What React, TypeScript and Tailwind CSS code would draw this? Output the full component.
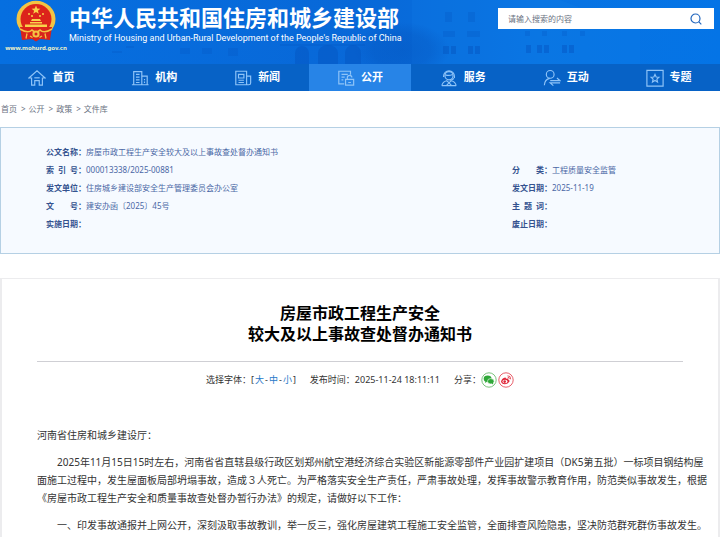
import type { ReactNode } from "react";

type NavItem = { name: string; icon: ReactNode; current?: boolean };

const navItems: NavItem[] = [
  {
    name: "首页",
    icon: (
      <>
        <path d="M1 10 L10 2 L19 10 H16 V18 H12.5 V13 H7.5 V18 H4 V10 Z" />
        <path d="M7 9.8 H13" />
      </>
    ),
  },
  {
    name: "机构",
    icon: (
      <>
        <path d="M3 17.5 V3 H12 V17.5 M12 8 H18 V17.5 M1 17.5 H19.5" />
        <path d="M5.5 6 H9.5 M5.5 9 H9.5 M5.5 12 H9.5 M5.5 15 H9.5 M15 11 V12.5 M15 14 V15.5" />
      </>
    ),
  },
  {
    name: "新闻",
    icon: (
      <>
        <path d="M2 2.5 H14 V17.5 H2 Z M14 8 H18.5 V15.5 Q18.5 17.5 16.5 17.5 H13" />
        <path d="M5 6 H11 V10 H5 Z M5 12.5 H11 M5 15 H11" />
      </>
    ),
  },
  {
    name: "公开",
    current: true,
    icon: (
      <>
        <path d="M8 16.5 H2 V2.5 H15 V6.5 M5 6 H12 M5 9 H8.5 M5 12 H7" />
        <path d="M9.5 11.5 H18.5 V18 H9.5 Z M11.5 11.5 V9.5 A2.5 2.5 0 0 1 16.5 9.5 M12.5 15 H15.5" />
      </>
    ),
  },
  {
    name: "服务",
    icon: (
      <>
        <circle cx="10" cy="7.5" r="4.5" />
        <path d="M4 9 V8 A6 6 0 0 1 16 8 V10 M6 6.5 Q10 8 14 6 M15.5 10.5 Q14 12.5 11 12.5" />
        <path d="M2 18.5 Q3 14 7.5 13 L12.5 18 M18 18.5 Q17 14 12.5 13 L7.5 18 M2 18.5 H18" />
      </>
    ),
  },
  {
    name: "互动",
    icon: (
      <>
        <circle cx="8" cy="6" r="4.3" />
        <path d="M1.5 18 Q2 11.5 7.5 10.5" />
        <path d="M8 13 H19 L15.5 10 M19 15.5 H8 L11.5 18.5" />
      </>
    ),
  },
  {
    name: "专题",
    icon: (
      <>
        <path d="M1 1.5 H19 V19 H1 Z" />
        <path d="M10 6 L11.3 8.9 L14.4 9.2 L12.1 11.3 L12.8 14.4 L10 12.8 L7.2 14.4 L7.9 11.3 L5.6 9.2 L8.7 8.9 Z" />
      </>
    ),
  },
];

const crumbs = ["首页", "公开", "政策", "文件库"];

const leftFields = [
  { label: "公文名称", value: "房屋市政工程生产安全较大及以上事故查处督办通知书" },
  { label: "索 引 号", value: "000013338/2025-00881" },
  { label: "发文单位", value: "住房城乡建设部安全生产管理委员会办公室" },
  { label: "文 号", value: "建安办函〔2025〕45号" },
  { label: "实施日期", value: "" },
];

const rightFields = [
  { label: "分 类", value: "工程质量安全监管" },
  { label: "发文日期", value: "2025-11-19" },
  { label: "主 题 词", value: "" },
  { label: "废止日期", value: "" },
];

function Emblem() {
  return (
    <svg viewBox="0 0 40 42" className="h-[42px] w-10" aria-hidden="true">
      <ellipse cx="20" cy="19" rx="19.5" ry="18.2" fill="#f3c443" />
      <path d="M4 27 L36 27 L34 40 L24 39 L20 41.5 L16 39 L6 40 Z" fill="#d8231c" />
      <ellipse cx="20" cy="19" rx="15.5" ry="15" fill="#dc241b" />
      <path
        d="M20 5.5 L21.2 8.6 L24.4 8.7 L21.9 10.7 L22.8 13.8 L20 12 L17.2 13.8 L18.1 10.7 L15.6 8.7 L18.8 8.6 Z"
        fill="#f9d24a"
      />
      <g fill="#f9d24a">
        <circle cx="13" cy="14" r="1" />
        <circle cx="16" cy="16" r="1" />
        <circle cx="24" cy="16" r="1" />
        <circle cx="27" cy="14" r="1" />
        <path d="M15 21 L16 19 H24 L25 21 Z M14 22 H26 V23.5 H14 Z" />
        <path d="M9 24.5 H31 V27 H9 Z" />
      </g>
      <path d="M4 29 Q12 34 16 30 L20 33 L24 30 Q28 34 36 29" fill="none" stroke="#f3c443" strokeWidth="1.6" />
      <circle cx="20" cy="34" r="3.6" fill="#f3c443" />
      <circle cx="20" cy="34" r="1.5" fill="#d8231c" />
      <path d="M11 33.5 L10 38.5 M29 33.5 L30 38.5 M14 36 L16.5 37.5 M26 36 L23.5 37.5" stroke="#f3c443" strokeWidth="1.3" />
    </svg>
  );
}

function HeaderBackdrop() {
  return (
    <svg
      viewBox="0 0 720 64"
      preserveAspectRatio="xMidYMid slice"
      className="absolute inset-0 size-full"
      aria-hidden="true"
    >
      <defs>
        <linearGradient id="sky" x1="0" x2="1">
          <stop offset="0" stopColor="#066fe0" />
          <stop offset="0.5" stopColor="#0868d8" />
          <stop offset="0.75" stopColor="#0873e2" />
          <stop offset="1" stopColor="#0474e6" />
        </linearGradient>
        <radialGradient id="tree">
          <stop offset="0" stopColor="#0450b8" stopOpacity="0.4" />
          <stop offset="0.6" stopColor="#0450b8" stopOpacity="0.3" />
          <stop offset="1" stopColor="#0450b8" stopOpacity="0" />
        </radialGradient>
      </defs>
      <rect width="720" height="64" fill="url(#sky)" />
      <path d="M412 0 H560 L640 30 V64 H412 Z" fill="#1580ea" opacity="0.2" />
      <ellipse cx="402" cy="50" rx="48" ry="28" fill="url(#tree)" />
      <g fill="#0455c0" opacity="0.45">
        <path d="M295 64 V53 A7 7 0 0 1 309 53 V64 Z M318 64 V53 A10 8 0 0 1 338 53 V64 Z M345 64 V53 A8 8 0 0 1 361 53 V64 Z" />
        <path d="M443 46 H449 V54 H443 Z M451 46 H456 V54 H451 Z M468 46 H473 V54 H468 Z M475 46 H480 V54 H475 Z M526 45 H531 V53 H526 Z M537 45 H542 V53 H537 Z M544 45 H549 V53 H544 Z M562 45 H567 V53 H562 Z M569 45 H574 V53 H569 Z" />
      </g>
      <g fill="#0455c0" opacity="0.25">
        <path d="M443 31 H455 V37 H443 Z M467 31 H480 V37 H467 Z M525 31 H530 V36 H525 Z M542 31 H547 V36 H542 Z M562 31 H567 V36 H562 Z M580 31 H585 V36 H580 Z M445 12 H452 V22 H445 Z M468 12 H475 V22 H468 Z" />
        <path d="M112 51 H122 V53 H112 Z M126 46 H134 V48 H126 Z M180 48 H190 V54 H180 Z M202 48 H212 V54 H202 Z M228 48 H238 V56 H228 Z M280 44 H365 V46 H280 Z" />
      </g>
    </svg>
  );
}

function Fields({ items }: { items: { label: string; value: string }[] }) {
  return (
    <dl className="text-[8px]/[18px] text-[#4a67a5]">
      {items.map((item) => (
        <div key={item.label} className="flex">
          <dt className="flex font-semibold text-[#34528f]">
            <span className="w-8 [text-align-last:justify]">{item.label}</span>：
          </dt>
          <dd>{item.value}</dd>
        </div>
      ))}
    </dl>
  );
}

export default function App() {
  return (
    <div className="h-screen overflow-hidden bg-white font-['Noto_Sans','Noto_Sans_CJK_SC',sans-serif]">
      <header className="relative flex h-16 items-start bg-[#086fdd] text-white">
        <HeaderBackdrop />
        <div className="relative flex w-full">
          <a href="#home" className="ml-1 flex w-16 shrink-0 flex-col items-center">
            <Emblem />
            <span className="text-[6px]/[12px] font-bold text-[#f2f3c4]">www.mohurd.gov.cn</span>
          </a>
          <div className="ml-px pt-1">
            <h1 className="text-[22px]/[27px] font-bold whitespace-nowrap">中华人民共和国住房和城乡建设部</h1>
            <p className="font-[Roboto,'Liberation_Sans',sans-serif] text-[9px]/[14px] whitespace-nowrap">
              Ministry of Housing and Urban-Rural Development of the People's Republic of China
            </p>
          </div>
          <form className="mt-2 mr-1.5 ml-auto flex h-[21px] w-54 shrink-0 bg-white">
            <input
              type="search"
              aria-label="搜索"
              placeholder="请输入搜索的内容"
              className="min-w-0 flex-1 px-2.5 text-[8px] text-gray-700 outline-none placeholder:text-gray-500"
            />
            <button type="button" aria-label="搜索" className="px-3">
              <svg viewBox="0 0 12 12" className="size-3" fill="none" stroke="#2065bd" strokeWidth="1.2">
                <circle cx="5.5" cy="5.5" r="4.5" />
                <path d="M8.7 8.7 L11.3 11.3" />
              </svg>
            </button>
          </form>
        </div>
      </header>

      <nav className="grid h-[27px] grid-cols-7 bg-[#0762c6]">
        {navItems.map((item) => (
          <a
            key={item.name}
            href="#nav"
            className={
              item.current
                ? "flex items-center justify-center gap-1.5 bg-[#2784e7] text-[11px] font-bold text-white"
                : "flex items-center justify-center gap-1.5 text-[11px] font-bold text-white"
            }
          >
            <svg
              viewBox="0 0 20 20"
              className="size-[18px]"
              fill="none"
              stroke="#8fc4f8"
              strokeWidth="1.3"
              aria-hidden="true"
            >
              {item.icon}
            </svg>
            {item.name}
          </a>
        ))}
      </nav>

      <div className="flex h-9 items-center gap-1 px-px text-[8px] text-gray-500">
        {crumbs.map((crumb, i) => (
          <span key={crumb} className="flex gap-[3px]">
            {i > 0 && <span>&gt;</span>}
            <a href="#crumb">{crumb}</a>
          </span>
        ))}
      </div>

      <section className="flex h-[127px] items-start justify-between border border-[#b5d0e4] bg-[#f6faff] pt-[15px] pr-[103px] pl-[45px]">
        <Fields items={leftFields} />
        <div className="pt-[18px]">
          <Fields items={rightFields} />
        </div>
      </section>

      <article className="mt-6 border-x-2 border-t border-[#ececee] px-[35px] py-6 text-[#333]">
        <h2 className="text-center text-[16px]/[21px] font-bold text-black">
          房屋市政工程生产安全
          <br />
          较大及以上事故查处督办通知书
        </h2>
        <div className="mt-4 flex items-center justify-center gap-3.5 border-t border-[#cfcfd4] pt-2.5 text-[9px]">
          <div className="flex">
            选择字体：[
            <button type="button" className="px-px text-[#2878c8]">大</button>-
            <button type="button" className="px-px text-[#2878c8]">中</button>-
            <button type="button" className="px-px text-[#2878c8]">小</button>]
          </div>
          <span>发布时间：2025-11-24 18:11:11</span>
          <div className="flex items-center">
            分享：
            <button type="button" aria-label="微信">
              <svg viewBox="0 0 16 16" className="size-4">
                <circle cx="8" cy="8" r="7.2" fill="#fff" stroke="#7cc47f" />
                <ellipse cx="6.6" cy="6.8" rx="3.9" ry="3.2" fill="#2fa838" />
                <ellipse cx="9.8" cy="9.3" rx="3.3" ry="2.7" fill="#2fa838" stroke="#fff" strokeWidth="0.6" />
                <path d="M4.5 9 L4 11 L6 9.8 Z M10.5 11.5 L12.2 12.6 L12 10.8 Z" fill="#2fa838" />
              </svg>
            </button>
            <button type="button" aria-label="微博" className="ml-px">
              <svg viewBox="0 0 16 16" className="size-4">
                <circle cx="8" cy="8" r="7.2" fill="#fff" stroke="#e8606c" />
                <path d="M3 9.5 Q4 6 7.2 5.4 Q8.4 5.6 7.9 6.8 Q10.6 6 10.2 7.6 Q12 8.2 11.3 9.8 Q10 12.2 7 12.2 Q3.4 12 3 9.5 Z" fill="#df2638" />
                <ellipse cx="7" cy="9.5" rx="2.6" ry="1.7" fill="#fff" />
                <circle cx="6.7" cy="9.6" r="1.3" fill="#df2638" />
                <path d="M9.5 3.8 Q13 3.6 12.6 7.3 M9.7 5.3 Q11.4 5.2 11.2 6.9" fill="none" stroke="#df2638" strokeWidth="0.8" />
              </svg>
            </button>
          </div>
        </div>
        <div className="mt-[38px] -mr-7 space-y-[9px] text-[10px]/[18px]">
          <p>河南省住房和城乡建设厅：</p>
          <p className="indent-[2em]">
            2025年11月15日15时左右，河南省省直辖县级行政区划郑州航空港经济综合实验区新能源零部件产业园扩建项目（DK5第五批）一标项目钢结构屋面施工过程中，发生屋面板局部坍塌事故，造成３人死亡。为严格落实安全生产责任，严肃事故处理，发挥事故警示教育作用，防范类似事故发生，根据《房屋市政工程生产安全和质量事故查处督办暂行办法》的规定，请做好以下工作：
          </p>
          <p className="indent-[2em]">
            一、印发事故通报并上网公开，深刻汲取事故教训，举一反三，强化房屋建筑工程施工安全监管，全面排查风险隐患，坚决防范群死群伤事故发生。
          </p>
        </div>
      </article>
    </div>
  );
}
